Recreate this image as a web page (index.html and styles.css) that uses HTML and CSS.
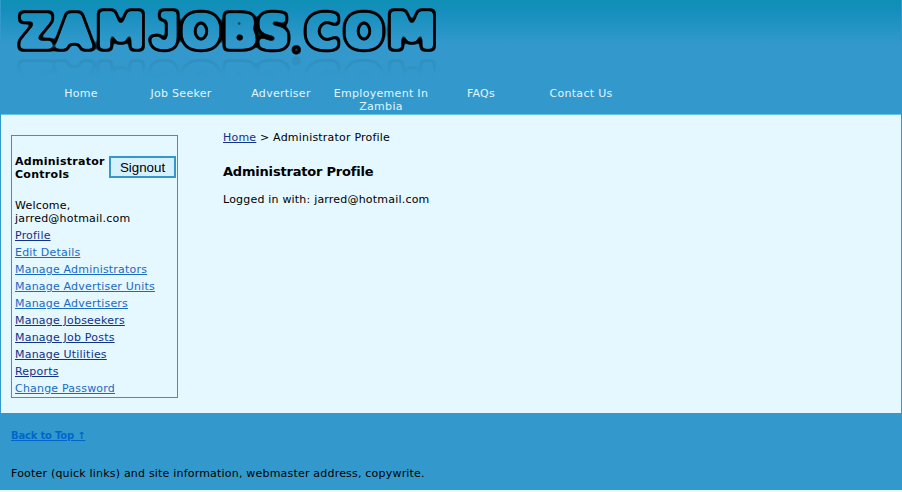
FILE: index.html
```html
<!DOCTYPE html>
<html lang="en">
<head>
<meta charset="utf-8">
<title>Zamjobs.com - Administrator Profile</title>
<link rel="stylesheet" href="styles.css">
</head>
<body>
<div class="page">
  <header class="header">
    <svg class="logo" width="450" height="56" viewBox="0 0 450 56" role="img" aria-label="Zamjobs.com">
      <defs>
        <filter id="bubble" x="0" y="0" width="450" height="56" filterUnits="userSpaceOnUse">
          <feMorphology in="SourceAlpha" operator="dilate" radius="2"/>
          <feGaussianBlur stdDeviation="2"/>
          <feComponentTransfer>
            <feFuncA type="table" tableValues="0 0 0 .7 1 1 1 1 1 .7 0 0 0 0"/>
          </feComponentTransfer>
        </filter>
      </defs>
      <text class="logo-text" filter="url(#bubble)" y="48" x="18 55 95 150 180 221 256 293 304 343 386"><tspan>ZA</tspan><tspan class="wide">M</tspan><tspan class="hook">J</tspan>OB<tspan class="narrow">S</tspan><tspan class="dot" dy="3">.</tspan><tspan dy="-3">CO</tspan><tspan class="wide">M</tspan></text>
    </svg>
    <nav class="nav">
      <a>Home</a>
      <a>Job Seeker</a>
      <a>Advertiser</a>
      <a>Employement In Zambia</a>
      <a>FAQs</a>
      <a>Contact Us</a>
    </nav>
  </header>
  <div class="main">
    <aside class="sidebar">
      <div class="controls">
        <h2>Administrator Controls</h2>
        <button class="signout" type="button">Signout</button>
      </div>
      <p class="welcome">Welcome,<br>jarred@hotmail.com</p>
      <ul class="links">
        <li><a class="visited" href="#">Profile</a></li>
        <li><a href="#">Edit Details</a></li>
        <li><a href="#">Manage Administrators</a></li>
        <li><a href="#">Manage Advertiser Units</a></li>
        <li><a href="#">Manage Advertisers</a></li>
        <li><a class="visited" href="#">Manage Jobseekers</a></li>
        <li><a class="visited" href="#">Manage Job Posts</a></li>
        <li><a class="visited" href="#">Manage Utilities</a></li>
        <li><a class="visited" href="#">Reports</a></li>
        <li><a href="#">Change Password</a></li>
      </ul>
    </aside>
    <main class="content">
      <p class="crumbs"><a class="visited" href="#">Home</a> &gt; Administrator Profile</p>
      <h1>Administrator Profile</h1>
      <p>Logged in with: jarred@hotmail.com</p>
    </main>
  </div>
  <footer class="footer">
    <a class="top" href="#">Back to Top ↑</a>
    <p>Footer (quick links) and site information, webmaster address, copywrite.</p>
  </footer>
</div>
</body>
</html>
```
FILE: styles.css
```css
* { box-sizing: border-box; }

body {
  margin: 0;
  height: 492px;
  overflow: hidden;
  background: #e6f7ff;
  color: #000;
  font: 11px/13px Verdana, "DejaVu Sans", sans-serif;
  letter-spacing: .2px;
}

h1, h2, p, ul { margin: 0; padding: 0; }
a { color: #1a6bbf; }
a.visited { color: #113388; }

.page {
  height: 490px;
  border: solid #3399cc;
  border-width: 0 1px;
  background: #e5f7ff;
}

.header {
  height: 115px;
  border-bottom: 1px solid #66c5e6;
  background: linear-gradient(#0e90b5 0, #148fbd 10px, #3399cc 45px);
}

.logo {
  display: block;
  overflow: visible;
  letter-spacing: 0;
  -webkit-box-reflect: below -1px linear-gradient(transparent 60%, rgba(0, 0, 0, .08));
}

.logo-text {
  font: bold 47px "DejaVu Sans", sans-serif;
}

.wide { font-size: 50px; }
.narrow { font-size: 46px; }
.hook { font: bold 51px "Liberation Sans", sans-serif; }
.dot { font-size: 12px; }

.nav {
  display: flex;
  padding: 31px 0 0 30px;
}

.nav a {
  width: 100px;
  color: #e0f6ff;
  text-align: center;
  letter-spacing: .3px;
}

.main {
  display: flex;
  height: 298px;
}

.sidebar {
  width: 167px;
  height: 263px;
  margin: 20px 0 0 10px;
  padding: 19px 1px 0 3px;
  border: 1px solid #3399b5;
}

.controls {
  display: flex;
  justify-content: space-between;
  height: 44px;
}

.controls h2 {
  width: 94px;
  font-size: 11px;
  line-height: 13px;
  letter-spacing: .28px;
}

.signout {
  flex: none;
  width: 67px;
  height: 22px;
  margin-top: 1px;
  padding: 0;
  border: 2px solid #3399cc;
  background: #d5f1ff;
  color: #000;
  font: 13.33px "Liberation Sans", sans-serif;
}

.welcome { margin-bottom: 2px; }
.links { list-style: none; }
.links li { height: 17px; padding: 2px 0; }

.content { padding: 16px 0 0 45px; }

.content h1 {
  margin: 20px 0 14px;
  font-size: 13px;
  line-height: 15px;
  letter-spacing: -.2px;
}

.footer {
  height: 77px;
  padding: 16px 10px 0;
  background: #3399cc;
}

.top {
  display: block;
  height: 38px;
  color: #0066cc;
  font-size: 10px;
  font-weight: bold;
  letter-spacing: -.2px;
}
```
